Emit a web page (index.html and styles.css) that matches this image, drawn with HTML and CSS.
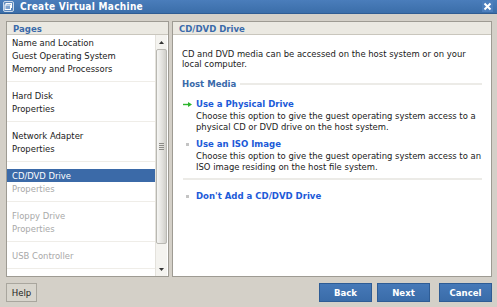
FILE: index.html
```html
<!DOCTYPE html>
<html>
<head>
<meta charset="utf-8">
<link rel="stylesheet" href="styles.css">
</head>
<body>
<div class="window">
  <div class="titlebar">
    <svg class="title-icon" width="11" height="11" viewBox="0 0 11 11">
      <rect x="0.5" y="0.5" width="10" height="10" rx="1.5" fill="#5d88bd" stroke="#c9d8ea"/>
      <rect x="3" y="2.5" width="5.5" height="4" fill="none" stroke="#ffffff" stroke-width="1"/>
      <rect x="2" y="4" width="5.5" height="4.5" fill="#7fa3cf" stroke="#ffffff" stroke-width="1"/>
    </svg>
    <span class="title-text">Create Virtual Machine</span>
    <span class="close">
      <svg width="9" height="9" viewBox="0 0 9 9"><path d="M1.5 1.5 L7.5 7.5 M7.5 1.5 L1.5 7.5" stroke="#ffffff" stroke-width="2"/></svg>
    </span>
  </div>
  <div class="content">
    <div class="panel pages">
      <div class="panel-head">Pages</div>
      <div class="list-wrap">
        <div class="list">
          <div class="group first">
            <div class="item">Name and Location</div>
            <div class="item">Guest Operating System</div>
            <div class="item">Memory and Processors</div>
          </div>
          <div class="group">
            <div class="item">Hard Disk</div>
            <div class="item">Properties</div>
          </div>
          <div class="group">
            <div class="item">Network Adapter</div>
            <div class="item">Properties</div>
          </div>
          <div class="group">
            <div class="item selected">CD/DVD Drive</div>
            <div class="item disabled">Properties</div>
          </div>
          <div class="group">
            <div class="item disabled">Floppy Drive</div>
            <div class="item disabled">Properties</div>
          </div>
          <div class="group">
            <div class="item disabled">USB Controller</div>
          </div>
        </div>
        <div class="scrollbar">
          <div class="arrow up"><svg width="5" height="3" viewBox="0 0 5 3"><path d="M0 3 L2.5 0 L5 3 Z" fill="#333"/></svg></div>
          <div class="track">
            <div class="thumb">
              <div class="grip"><span></span><span></span><span></span><span></span></div>
            </div>
          </div>
          <div class="arrow down"><svg width="5" height="3" viewBox="0 0 5 3"><path d="M0 0 L2.5 3 L5 0 Z" fill="#333"/></svg></div>
        </div>
      </div>
    </div>
    <div class="panel main">
      <div class="panel-head">CD/DVD Drive</div>
      <div class="main-body">
        <p class="intro">CD and DVD media can be accessed on the host system or on your local computer.</p>
        <div class="section-title"><span>Host Media</span><span class="rule"></span></div>
        <div class="option">
          <div class="opt-title"><span class="marker"><svg width="9" height="5" viewBox="0 0 9 5"><path d="M0 2.5 H6" stroke="#2db52d" stroke-width="1.4"/><path d="M5 0 L9 2.5 L5 5 Z" fill="#2db52d"/></svg></span><span class="link">Use a Physical Drive</span></div>
          <div class="opt-desc">Choose this option to give the guest operating system access to a physical CD or DVD drive on the host system.</div>
        </div>
        <div class="option">
          <div class="opt-title"><span class="marker"><span class="dot"></span></span><span class="link">Use an ISO Image</span></div>
          <div class="opt-desc">Choose this option to give the guest operating system access to an ISO image residing on the host file system.</div>
        </div>
        <div class="sep"></div>
        <div class="option">
          <div class="opt-title"><span class="marker"><span class="dot"></span></span><span class="link">Don't Add a CD/DVD Drive</span></div>
        </div>
      </div>
    </div>
  </div>
  <div class="footer">
    <button class="btn help">Help</button>
    <div class="spacer"></div>
    <button class="btn primary">Back</button>
    <button class="btn primary">Next</button>
    <button class="btn primary cancel">Cancel</button>
  </div>
</div>
</body>
</html>
```
FILE: styles.css
```css
* { box-sizing: border-box; }
html, body { margin: 0; padding: 0; }
body {
  width: 497px;
  height: 307px;
  overflow: hidden;
  background: #d4d0c8;
  font-family: "DejaVu Sans Condensed", "DejaVu Sans", sans-serif;
  font-size: 9.4px;
  color: #1a1a1a;
}
.window { width: 497px; height: 307px; display: flex; flex-direction: column; }
.titlebar {
  height: 14px;
  background: linear-gradient(#4a7dbb, #3b6ea9);
  border-bottom: 1px solid #2f5c92;
  display: flex;
  align-items: center;
  padding: 0 4px 0 3px;
  color: #fff;
}
.title-icon { display: block; margin-right: 6px; }
.title-text { font-weight: bold; font-size: 10px; letter-spacing: 0.3px; }
.close {
  margin-left: auto;
  width: 11px; height: 11px;
  display: flex; align-items: center; justify-content: center;
  background: #4d7fbd;
}
.close svg { display: block; }
.content {
  display: flex;
  gap: 3px;
  padding: 7px 5px 0 6px;
  height: 263px;
}
.panel {
  border: 1px solid #9e9b93;
  background: #fff;
  display: flex;
  flex-direction: column;
}
.pages { width: 163px; }
.main { width: 320px; }
.panel-head {
  height: 13px;
  background: #ebe9e2;
  border-bottom: 1px solid #c9c6bd;
  color: #3a6aaa;
  font-weight: bold;
  font-size: 9.5px;
  line-height: 12px;
  padding: 1px 0 0 6px;
  flex: none;
}
.list-wrap { flex: 1; display: flex; min-height: 0; }
.list { flex: 1; padding-top: 1px; }
.group { padding: 7px 0 6px; border-bottom: 1px solid #efede8; }
.group.first { padding-top: 0; }
.item { height: 13px; line-height: 13px; padding-left: 5px; white-space: nowrap; color: #1a1a1a; }
.item.selected { background: #3b6aa8; color: #fff; }
.item.disabled { color: #a8a8a8; }
.scrollbar {
  width: 12px;
  margin-right: 1px;
  display: flex;
  flex-direction: column;
  background: #f4f3ef;
  border-left: 1px solid #e4e2dc;
}
.arrow { height: 14px; display: flex; align-items: center; justify-content: center; flex: none; }
.arrow svg { display: block; }
.track { flex: 1; display: flex; flex-direction: column; padding-bottom: 18px; }
.thumb {
  flex: 1;
  background: linear-gradient(90deg, #f6f6f4, #e1e0dc 60%, #cfcec9);
  border: 1px solid #b9b8b2;
  border-radius: 2px;
  display: flex;
  align-items: center;
  justify-content: center;
}
.grip { display: flex; flex-direction: column; gap: 1px; }
.grip span { display: block; width: 5px; height: 1px; background: #8c8b86; }
.main-body { padding: 14px 16px 0 9px; }
.intro { margin: 0 0 9px 0; line-height: 10px; color: #1a1a1a; }
.section-title { display: flex; align-items: center; height: 12px; color: #3a6aaa; font-weight: bold; font-size: 9.5px; line-height: 12px; margin-bottom: 8px; margin-right: -7px; }
.section-title .rule { flex: 1; height: 2px; background: #ecebe7; margin-left: 4px; }
.option { margin-bottom: 6px; }
.opt-title { display: flex; align-items: center; height: 12px; line-height: 12px; }
.marker { width: 14px; display: flex; align-items: center; justify-content: center; padding-right: 3px; flex: none; }
.marker svg { display: block; }
.dot { display: block; width: 3px; height: 3px; background: #c4c4c4; }
.link { color: #1c5ad8; font-weight: bold; font-size: 9.5px; }
.opt-desc { padding-left: 14px; line-height: 11px; margin-right: -14px; color: #1a1a1a; }
.sep { height: 2px; background: #ecebe7; margin: 2px -7px 10px 1px; }
.footer {
  display: flex;
  gap: 5px;
  padding: 6px 5px 0 6px;
  height: 25px;
}
.spacer { flex: 1; }
.btn {
  height: 19px;
  font-family: "DejaVu Sans Condensed", "DejaVu Sans", sans-serif;
  font-size: 9.5px;
  padding: 0;
  margin: 0;
}
.help {
  width: 31px;
  background: #d8d5cd;
  border: 1px solid #a9a69e;
  color: #222;
}
.primary {
  width: 53px;
  background: linear-gradient(#4679b8, #3a6ca9);
  border: 1px solid #2e5c95;
  color: #fff;
  font-weight: bold;
}
.cancel { margin-left: 4px; }
```
